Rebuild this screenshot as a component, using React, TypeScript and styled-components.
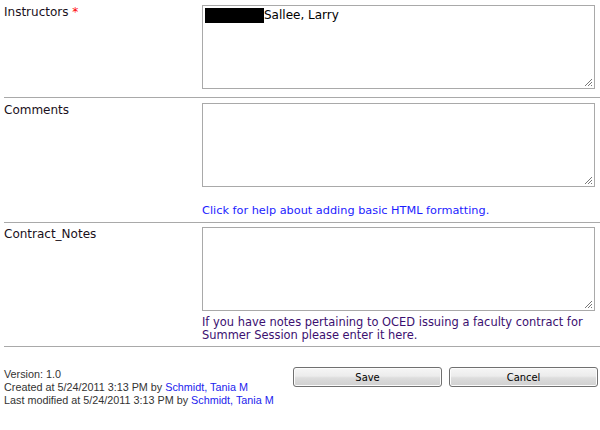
import React from "react";
import styled, { createGlobalStyle } from "styled-components";

const Global = createGlobalStyle`
  html, body { margin: 0; padding: 0; background: #fff; }
  body { font-family: "DejaVu Sans", Verdana, sans-serif; font-size: 11px; }
`;

const Page = styled.div`
  width: 600px;
  display: flex;
  flex-direction: column;
`;

const Row = styled.div`
  display: grid;
  grid-template-columns: 198px 393px;
  margin-left: 4px;
  border-bottom: 1px solid #a9a9a9;
  padding: ${(p: { $top: number; $bottom: number }) => `${p.$top}px 0 ${p.$bottom}px 0`};
`;

const Label = styled.div`
  color: #1a1020;
  font-size: 12px;
  line-height: 14px;
`;

const Req = styled.span`
  color: #ff0000;
`;

const Field = styled.div`
  display: flex;
  flex-direction: column;
`;

const Box = styled.div`
  position: relative;
  box-sizing: border-box;
  width: 393px;
  height: 84px;
  border: 1px solid #a9a9a9;
  background: #fff;
  padding: 2px 2px;
  font-size: 12px;
  color: #000;
`;

const Grip = styled.svg`
  position: absolute;
  right: 1px;
  bottom: 1px;
`;

const Redact = styled.span`
  display: inline-block;
  width: 59px;
  height: 15px;
  background: #000;
  vertical-align: top;
`;

const Entry = styled.div`
  display: flex;
  align-items: flex-start;
  line-height: 15px;
`;

const Help = styled.a`
  color: #1c1cff;
  text-decoration: none;
  font-size: 11.3px;
  line-height: 14px;
  margin-top: ${(p: { $mt: number }) => p.$mt}px;
`;

const Note = styled.div`
  color: #3b0f70;
  font-size: 11.45px;
  line-height: 13px;
  margin-top: 5px;
`;

const Footer = styled.div`
  display: flex;
  justify-content: space-between;
  padding: 19px 2px 0 4px;
`;

const Meta = styled.div`
  font-family: "Liberation Sans", Tahoma, sans-serif;
  font-size: 10.8px;
  line-height: 13px;
  color: #333;
  padding-top: 2px;
`;

const MetaLink = styled.a`
  color: #2222ee;
  text-decoration: none;
`;

const Buttons = styled.div`
  display: flex;
  gap: 7px;
  padding-top: 1px;
`;

const Button = styled.button`
  box-sizing: border-box;
  width: 149px;
  height: 20px;
  border: 1px solid #707070;
  border-radius: 3px;
  background: linear-gradient(#f6f6f6 0%, #ececec 45%, #dddddd 55%, #d0d0d0 100%);
  font-family: "DejaVu Sans Condensed", Tahoma, sans-serif;
  font-size: 11px;
  color: #000;
  padding: 0;
  box-shadow: inset 0 0 0 1px #fcfcfc;
`;

const ResizeGrip = () => (
  <Grip width="9" height="9" viewBox="0 0 9 9">
    <path d="M8 1 L1 8 M8 4 L4 8 M8 7 L7 8" stroke="#777" strokeWidth="1" />
  </Grip>
);

export default function App() {
  return (
    <Page>
      <Global />
      <Row $top={5} $bottom={8}>
        <Label>
          Instructors <Req>*</Req>
        </Label>
        <Field>
          <Box>
            <Entry>
              <Redact />
              <span>Sallee, Larry</span>
            </Entry>
            <ResizeGrip />
          </Box>
        </Field>
      </Row>
      <Row $top={5} $bottom={4}>
        <Label>Comments</Label>
        <Field>
          <Box>
            <ResizeGrip />
          </Box>
          <Help href="#" $mt={17}>
            Click for help about adding basic HTML formatting.
          </Help>
        </Field>
      </Row>
      <Row $top={4} $bottom={4}>
        <Label>Contract_Notes</Label>
        <Field>
          <Box>
            <ResizeGrip />
          </Box>
          <Note>
            If you have notes pertaining to OCED issuing a faculty contract for
            <br />
            Summer Session please enter it here.
          </Note>
        </Field>
      </Row>
      <Footer>
        <Meta>
          Version: 1.0
          <br />
          Created at 5/24/2011 3:13 PM by <MetaLink href="#">Schmidt, Tania M</MetaLink>
          <br />
          Last modified at 5/24/2011 3:13 PM by <MetaLink href="#">Schmidt, Tania M</MetaLink>
        </Meta>
        <Buttons>
          <Button>Save</Button>
          <Button>Cancel</Button>
        </Buttons>
      </Footer>
    </Page>
  );
}
